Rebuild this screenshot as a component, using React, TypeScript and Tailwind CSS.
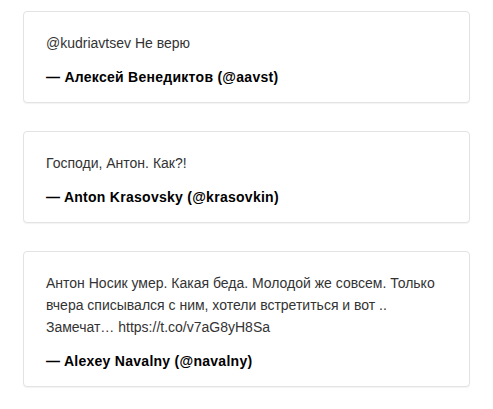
const quotes = [
  {
    text: "@kudriavtsev Не верю",
    author: "— Алексей Венедиктов (@aavst)",
  },
  {
    text: "Господи, Антон. Как?!",
    author: "— Anton Krasovsky (@krasovkin)",
  },
  {
    text: "Антон Носик умер. Какая беда. Молодой же совсем. Только вчера списывался с ним, хотели встретиться и вот .. Замечат… https://t.co/v7aG8yH8Sa",
    author: "— Alexey Navalny (@navalny)",
  },
];

export default function App() {
  return (
    <div
      className="min-h-screen bg-white pt-[11px] px-[23px]"
      style={{ fontFamily: '"Liberation Sans", Arial, sans-serif' }}
    >
      <div className="flex flex-col gap-[28px]">
        {quotes.map((q) => (
          <blockquote
            key={q.author}
            className="rounded-[4px] border border-[#e3e3e3] bg-white pt-[20px] pb-[14px] px-[22px] shadow-[0_1px_1px_rgba(0,0,0,0.05)]"
          >
            <p className="text-[14px] leading-[22px] text-[#333333]">{q.text}</p>
            <p className="mt-[12px] text-[14px] leading-[22px] font-bold tracking-[0.27px] text-black">
              {q.author}
            </p>
          </blockquote>
        ))}
      </div>
    </div>
  );
}
